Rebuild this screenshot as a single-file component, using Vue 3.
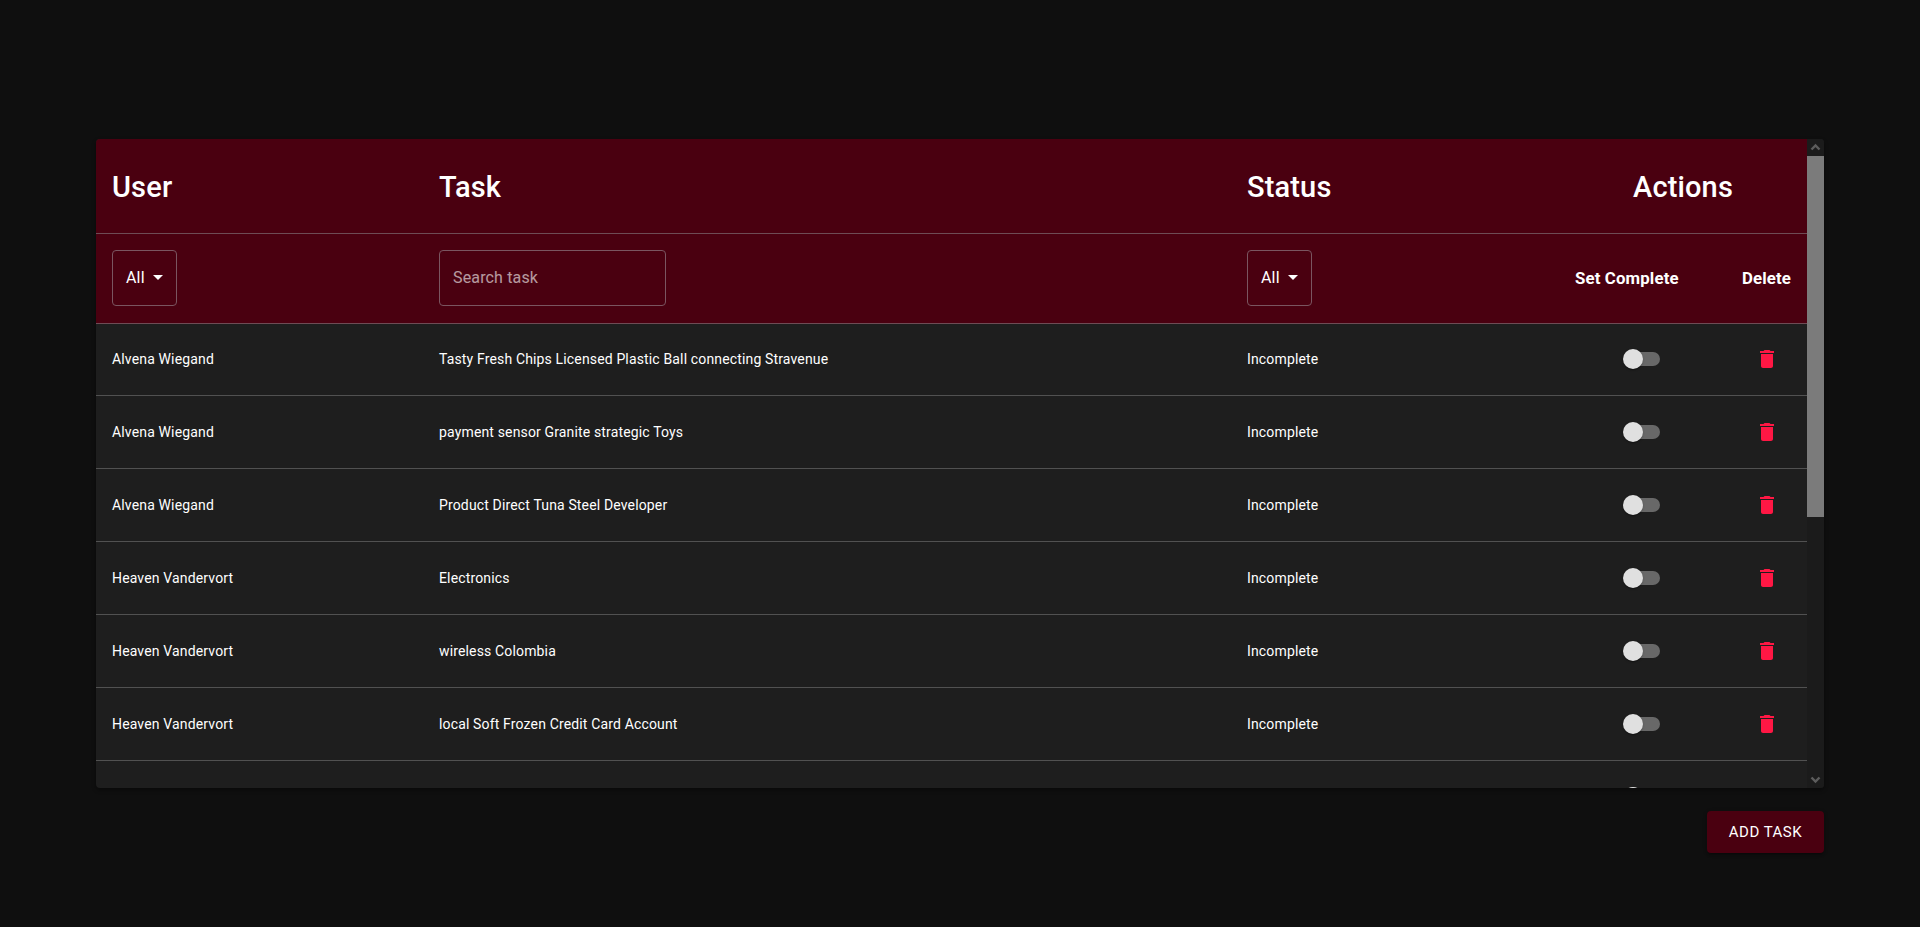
<script setup>
const rows = [
  ['Alvena Wiegand', 'Tasty Fresh Chips Licensed Plastic Ball connecting Stravenue', 'Incomplete'],
  ['Alvena Wiegand', 'payment sensor Granite strategic Toys', 'Incomplete'],
  ['Alvena Wiegand', 'Product Direct Tuna Steel Developer', 'Incomplete'],
  ['Heaven Vandervort', 'Electronics', 'Incomplete'],
  ['Heaven Vandervort', 'wireless Colombia', 'Incomplete'],
  ['Heaven Vandervort', 'local Soft Frozen Credit Card Account', 'Incomplete'],
  ['', '', '']
]
</script>

<template>
  <main class="page">
    <section class="card">
      <div class="table">
        <div class="grid head">
          <div class="cell">User</div>
          <div class="cell">Task</div>
          <div class="cell">Status</div>
          <div class="cell center">Actions</div>
        </div>
        <div class="grid filters">
          <div class="cell"><div class="select">All<span class="caret"></span></div></div>
          <div class="cell"><input class="search" placeholder="Search task" /></div>
          <div class="cell"><div class="select">All<span class="caret"></span></div></div>
          <div class="cell actions-head"><span>Set Complete</span><span>Delete</span></div>
        </div>
        <div v-for="(r, i) in rows" :key="i" class="grid row">
          <div class="cell">{{ r[0] }}</div>
          <div class="cell">{{ r[1] }}</div>
          <div class="cell">{{ r[2] }}</div>
          <div class="cell actions">
            <span class="switch"><span class="track"></span><span class="thumb"></span></span>
            <svg class="trash" viewBox="0 0 24 24" width="24" height="24"><path d="M6 19c0 1.1.9 2 2 2h8c1.1 0 2-.9 2-2V7H6v12zM19 4h-3.5l-1-1h-5l-1 1H5v2h14V4z"/></svg>
          </div>
        </div>
      </div>
      <div class="scrollbar">
        <div class="sb-btn">
          <svg viewBox="0 0 17 17" width="17" height="17"><path d="M4.5 10.5 8.5 6.5 12.5 10.5" /></svg>
        </div>
        <div class="sb-thumb"></div>
        <div class="sb-track"></div>
        <div class="sb-btn">
          <svg viewBox="0 0 17 17" width="17" height="17"><path d="M4.5 6.5 8.5 10.5 12.5 6.5" /></svg>
        </div>
      </div>
    </section>
    <div class="footer"><button class="add">ADD TASK</button></div>
  </main>
</template>

<style>
html, body { margin: 0; background: #0f0f0f; }
</style>

<style scoped>
.page {
  box-sizing: border-box;
  height: 927px;
  padding: 139px 96px 0;
  background: #0f0f0f;
  font-family: Roboto, sans-serif;
  color: #fff;
  overflow: hidden;
}
.card {
  display: flex;
  height: 649px;
  border-radius: 4px;
  overflow: hidden;
  background: #1e1e1e;
  box-shadow: 0 2px 4px rgba(0, 0, 0, .4);
}
.table { flex: 1; min-width: 0; overflow: hidden; }
.scrollbar {
  flex: 0 0 17px;
  display: flex;
  flex-direction: column;
  background: #1b1b1b;
}
.sb-btn { height: 17px; flex: none; background: #1b1b1b; }
.sb-btn svg { display: block; fill: none; stroke: #5c5c5c; stroke-width: 2.4; }
.sb-thumb { height: 361px; flex: none; background: #7b7b7b; }
.sb-track { flex: 1; }
.grid {
  display: grid;
  grid-template-columns: 327px 808px 328px 248px;
}
.cell {
  padding: 0 16px;
  display: flex;
  align-items: center;
  box-sizing: border-box;
  min-width: 0;
}
.head {
  height: 95px;
  background: #4a0010;
  border-bottom: 1px solid #6e4c55;
  box-sizing: border-box;
  font-size: 29px;
  font-weight: 500;
  letter-spacing: .15px;
  padding-top: 1px;
}
.center { justify-content: center; }
.filters {
  height: 90px;
  box-sizing: border-box;
  background: #4a0010;
  border-bottom: 1px solid #6e4c55;
  padding-bottom: 2px;
}
.select {
  box-sizing: border-box;
  width: 65px;
  height: 56px;
  border: 1px solid #7a5560;
  border-radius: 4px;
  display: flex;
  align-items: center;
  padding-left: 13px;
  font-size: 16px;
  letter-spacing: .15px;
}
.caret {
  margin-left: 8px;
  border-left: 5px solid transparent;
  border-right: 5px solid transparent;
  border-top: 5px solid #fff;
}
.search {
  box-sizing: border-box;
  width: 227px;
  height: 56px;
  padding: 0 13px;
  border: 1px solid #7a5560;
  border-radius: 4px;
  background: transparent;
  color: #fff;
  font: 400 16px Roboto, sans-serif;
  letter-spacing: .15px;
  outline: none;
}
.search::placeholder { color: #fff; opacity: .6; }
.actions-head {
  justify-content: space-between;
  font-size: 16.8px;
  font-weight: 700;
  letter-spacing: .15px;
}
.row {
  height: 73px;
  box-sizing: border-box;
  border-bottom: 1px solid #515151;
  font-size: 14px;
  letter-spacing: .15px;
}
.filters + .row { height: 72px; padding-bottom: 1px; }
.actions { padding-left: 64px; justify-content: space-between; padding-right: 28px; }
.switch { position: relative; display: block; width: 37px; height: 20px; }
.track {
  position: absolute;
  left: 3px;
  top: 3px;
  width: 34px;
  height: 14px;
  border-radius: 7px;
  background: #686868;
}
.thumb {
  position: absolute;
  left: 0;
  top: 0;
  width: 20px;
  height: 20px;
  border-radius: 50%;
  background: #e0e0e0;
  box-shadow: 0 2px 1px -1px rgba(0,0,0,.2), 0 1px 1px rgba(0,0,0,.14), 0 1px 3px rgba(0,0,0,.12);
}
.trash { fill: #ff1744; display: block; }
.footer { display: flex; justify-content: flex-end; margin-top: 23px; }
.add {
  box-sizing: border-box;
  width: 117px;
  height: 42px;
  border: 0;
  border-radius: 4px;
  background: #4a0010;
  color: #fff;
  font: 400 15px Roboto, sans-serif;
  letter-spacing: .5px;
  box-shadow: 0 3px 1px -2px rgba(0,0,0,.2), 0 2px 2px rgba(0,0,0,.14), 0 1px 5px rgba(0,0,0,.12);
}
</style>
